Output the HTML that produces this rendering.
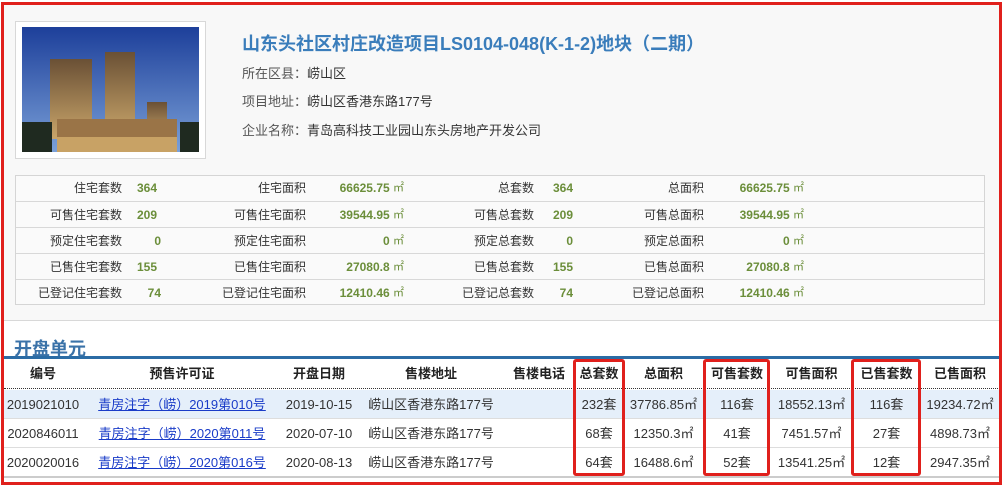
<!DOCTYPE html>
<html><head><meta charset="utf-8"><style>
*{margin:0;padding:0;box-sizing:border-box}
body{width:1003px;height:486px;background:#fff;font-family:"Liberation Sans","Microsoft YaHei","Noto Sans CJK SC",sans-serif;position:relative;overflow:hidden;color:#333}
.a{position:absolute;white-space:nowrap}
.panel{position:absolute;left:4px;top:5px;width:996px;height:316px;background:#f8f8f8;border-bottom:1px solid #d8d8d8}
.imgbox{position:absolute;left:15px;top:21px;width:191px;height:138px;border:1px solid #d8d8d8;background:#fff}
.title{left:242px;top:30px;font-size:18px;font-weight:bold;color:#3a7dbb}
.info{left:242px;font-size:13px;color:#555}
.info b{font-weight:normal;color:#333}
.stats{position:absolute;left:15px;top:175px;width:970px;height:130px;border:1px solid #d5d5d5;background:#fafafa}
.srow{position:absolute;left:0;width:968px;height:26px;border-top:1px solid #d8d8d8}
.l,.v{position:absolute;font-size:12px;line-height:16px;height:16px;top:5px;text-align:right;white-space:nowrap}
.l{color:#333}
.v{color:#6b8e3a;font-weight:bold}
.u{font-weight:normal;font-size:11px;line-height:16px;vertical-align:top}
.sec{left:14px;top:335px;font-size:18px;font-weight:bold;color:#3a72a8}
.bl{position:absolute;left:4px;top:356px;width:996px;height:3px;background:#2b6ca5}
.row{position:absolute;left:4px;width:996px}
.c{position:absolute;text-align:center;font-size:13px;line-height:16px;height:16px;top:7px;white-space:nowrap}
.h .c{font-weight:bold;color:#222;top:7px}
a{color:#1a3cc8;text-decoration:underline}
.rb{position:absolute;border:3px solid #e0201c;border-radius:3px}
</style></head><body>
<div class="panel"></div>
<div class="imgbox">
<svg width="177" height="125" style="position:absolute;left:6px;top:5px">
<defs><linearGradient id="s" x1="0" y1="0" x2="0" y2="1"><stop offset="0" stop-color="#1d3f9a"/><stop offset="1" stop-color="#7aa0d8"/></linearGradient>
<linearGradient id="b" x1="0" y1="0" x2="0" y2="1"><stop offset="0" stop-color="#6a5035"/><stop offset="1" stop-color="#c9a56a"/></linearGradient></defs>
<rect width="177" height="125" fill="url(#s)"/>
<rect x="28" y="32" width="42" height="80" fill="url(#b)"/>
<rect x="83" y="25" width="30" height="85" fill="url(#b)"/>
<rect x="125" y="75" width="20" height="37" fill="url(#b)"/>
<rect x="35" y="92" width="120" height="33" fill="#9a7447"/>
<rect x="0" y="95" width="30" height="30" fill="#1f2a20"/>
<rect x="158" y="95" width="19" height="30" fill="#1f2a20"/>
<rect x="35" y="110" width="120" height="15" fill="#e8c27a" opacity=".6"/>
</svg></div>
<div class="a title">山东头社区村庄改造项目LS0104-048(K-1-2)地块（二期）</div>
<div class="a info" style="top:63px">所在区县：<b>崂山区</b></div>
<div class="a info" style="top:91px">项目地址：<b>崂山区香港东路177号</b></div>
<div class="a info" style="top:120px">企业名称：<b>青岛高科技工业园山东头房地产开发公司</b></div>
<div class="stats">
<div class="srow" style="top:-1px;border-top:none"><span class="l" style="right:862px">住宅套数</span><span class="v" style="left:121px">364</span><span class="l" style="right:678px">住宅面积</span><span class="v" style="right:580px">66625.75 <span class="u">㎡</span></span><span class="l" style="right:450px">总套数</span><span class="v" style="right:411px">364</span><span class="l" style="right:280px">总面积</span><span class="v" style="right:180px">66625.75 <span class="u">㎡</span></span></div>
<div class="srow" style="top:25px"><span class="l" style="right:862px">可售住宅套数</span><span class="v" style="left:121px">209</span><span class="l" style="right:678px">可售住宅面积</span><span class="v" style="right:580px">39544.95 <span class="u">㎡</span></span><span class="l" style="right:450px">可售总套数</span><span class="v" style="right:411px">209</span><span class="l" style="right:280px">可售总面积</span><span class="v" style="right:180px">39544.95 <span class="u">㎡</span></span></div>
<div class="srow" style="top:51px"><span class="l" style="right:862px">预定住宅套数</span><span class="v" style="right:823px">0</span><span class="l" style="right:678px">预定住宅面积</span><span class="v" style="right:580px">0 <span class="u">㎡</span></span><span class="l" style="right:450px">预定总套数</span><span class="v" style="right:411px">0</span><span class="l" style="right:280px">预定总面积</span><span class="v" style="right:180px">0 <span class="u">㎡</span></span></div>
<div class="srow" style="top:77px"><span class="l" style="right:862px">已售住宅套数</span><span class="v" style="left:121px">155</span><span class="l" style="right:678px">已售住宅面积</span><span class="v" style="right:580px">27080.8 <span class="u">㎡</span></span><span class="l" style="right:450px">已售总套数</span><span class="v" style="right:411px">155</span><span class="l" style="right:280px">已售总面积</span><span class="v" style="right:180px">27080.8 <span class="u">㎡</span></span></div>
<div class="srow" style="top:103px"><span class="l" style="right:862px">已登记住宅套数</span><span class="v" style="right:823px">74</span><span class="l" style="right:678px">已登记住宅面积</span><span class="v" style="right:580px">12410.46 <span class="u">㎡</span></span><span class="l" style="right:450px">已登记总套数</span><span class="v" style="right:411px">74</span><span class="l" style="right:280px">已登记总面积</span><span class="v" style="right:180px">12410.46 <span class="u">㎡</span></span></div>
</div>
<div class="a sec">开盘单元</div>
<div class="bl"></div>
<div class="row h" style="top:359px;height:30px;border-bottom:1px dotted #333">
<div class="c" style="left:0;width:78px">编号</div><div class="c" style="left:78px;width:200px">预售许可证</div><div class="c" style="left:278px;width:74px">开盘日期</div><div class="c" style="left:352px;width:150px">售楼地址</div><div class="c" style="left:502px;width:66px">售楼电话</div><div class="c" style="left:570px;width:50px">总套数</div><div class="c" style="left:620px;width:79px">总面积</div><div class="c" style="left:700px;width:66px">可售套数</div><div class="c" style="left:766px;width:83px">可售面积</div><div class="c" style="left:849px;width:67px">已售套数</div><div class="c" style="left:916px;width:80px">已售面积</div>
</div>
<div class="row" style="top:390px;height:29px;background:#e5effa;border-bottom:1px solid #ddd">
<div class="c" style="left:0;width:78px">2019021010</div><div class="c" style="left:78px;width:200px"><a>青房注字（崂）2019第010号</a></div><div class="c" style="left:278px;width:74px">2019-10-15</div><div class="c" style="left:352px;width:150px">崂山区香港东路177号</div><div class="c" style="left:570px;width:50px">232套</div><div class="c" style="left:620px;width:79px">37786.85㎡</div><div class="c" style="left:700px;width:66px">116套</div><div class="c" style="left:766px;width:83px">18552.13㎡</div><div class="c" style="left:849px;width:67px">116套</div><div class="c" style="left:916px;width:80px">19234.72㎡</div>
</div>
<div class="row" style="top:419px;height:29px;border-bottom:1px solid #ddd">
<div class="c" style="left:0;width:78px">2020846011</div><div class="c" style="left:78px;width:200px"><a>青房注字（崂）2020第011号</a></div><div class="c" style="left:278px;width:74px">2020-07-10</div><div class="c" style="left:352px;width:150px">崂山区香港东路177号</div><div class="c" style="left:570px;width:50px">68套</div><div class="c" style="left:620px;width:79px">12350.3㎡</div><div class="c" style="left:700px;width:66px">41套</div><div class="c" style="left:766px;width:83px">7451.57㎡</div><div class="c" style="left:849px;width:67px">27套</div><div class="c" style="left:916px;width:80px">4898.73㎡</div>
</div>
<div class="row" style="top:448px;height:30px;border-bottom:2px solid #ccc">
<div class="c" style="left:0;width:78px">2020020016</div><div class="c" style="left:78px;width:200px"><a>青房注字（崂）2020第016号</a></div><div class="c" style="left:278px;width:74px">2020-08-13</div><div class="c" style="left:352px;width:150px">崂山区香港东路177号</div><div class="c" style="left:570px;width:50px">64套</div><div class="c" style="left:620px;width:79px">16488.6㎡</div><div class="c" style="left:700px;width:66px">52套</div><div class="c" style="left:766px;width:83px">13541.25㎡</div><div class="c" style="left:849px;width:67px">12套</div><div class="c" style="left:916px;width:80px">2947.35㎡</div>
</div>
<div class="rb" style="left:573px;top:359px;width:52px;height:117px"></div>
<div class="rb" style="left:703px;top:359px;width:67px;height:117px"></div>
<div class="rb" style="left:851px;top:359px;width:70px;height:117px"></div>
<div style="position:absolute;left:1px;top:2px;width:1001px;height:483px;border:3px solid #e0201c"></div>
</body></html>
